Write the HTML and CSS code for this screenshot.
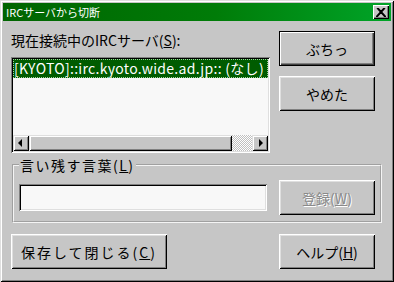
FILE: index.html
```html
<!DOCTYPE html>
<html lang="ja">
<head>
    <meta charset="UTF-8">
    <meta name="viewport" content="width=device-width, initial-scale=1.0">
    <title>IRCサーバから切断</title>
    <link rel="stylesheet" href="styles.css">
</head>
<body>
    <div class="window">
        <div class="titlebar">
            <span class="title">IRCサーバから切断</span>
            <span class="close-btn">
                <svg width="10" height="9" viewBox="0 0 10 9">
                    <path d="M1 0 L9 9 M2 0 L10 9 M9 0 L1 9 M8 0 L0 9" stroke="#000" stroke-width="1.2"/>
                </svg>
            </span>
        </div>
        <div class="main">
            <div class="top-row">
                <div class="server-col">
                    <div class="label">現在接続中のIRCサーバ(<u>S</u>):</div>
                    <div class="listbox">
                        <div class="list-items">
                            <div class="item selected">[KYOTO]::irc.kyoto.wide.ad.jp:: (なし)</div>
                        </div>
                        <div class="hscroll">
                            <span class="arrow-btn">
                                <svg width="14" height="14" viewBox="0 0 14 14"><polygon points="8,3 4,7 8,11" fill="#000"/></svg>
                            </span>
                            <span class="thumb"></span>
                            <span class="track"></span>
                            <span class="arrow-btn">
                                <svg width="14" height="14" viewBox="0 0 14 14"><polygon points="6,3 10,7 6,11" fill="#000"/></svg>
                            </span>
                        </div>
                    </div>
                </div>
                <div class="btn-col">
                    <button class="btn default">ぶちっ</button>
                    <button class="btn">やめた</button>
                </div>
            </div>
            <fieldset class="group">
                <legend>言い残す言葉(<u>L</u>)</legend>
                <div class="group-row">
                    <input class="textbox" type="text">
                    <button class="btn" disabled>登録(<u>W</u>)</button>
                </div>
            </fieldset>
            <div class="bottom-row">
                <button class="btn wide">保存して閉じる(<u>C</u>)</button>
                <button class="btn">ヘルプ(<u>H</u>)</button>
            </div>
        </div>
    </div>
</body>
</html>
```

FILE: styles.css
```css
body {
    margin: 0;
    padding: 0;
    font-family: "Noto Sans CJK JP", "Liberation Sans", sans-serif;
    font-size: 14px;
    color: #000;
    background-color: #c6c6c6;
}
.window {
    width: 394px;
    height: 282px;
    box-sizing: border-box;
    padding: 3px;
    background-color: #c6c6c6;
    box-shadow: inset 1px 1px #dfdfdf, inset -1px -1px #000, inset 2px 2px #fff, inset -2px -2px #808080;
}
.titlebar {
    height: 18px;
    display: flex;
    align-items: center;
    justify-content: space-between;
    padding: 0 2px;
    background: linear-gradient(to right, #006400, #007c08 55%, #00a428);
}
.title {
    color: #fff;
    font-size: 11px;
    line-height: 18px;
    padding-left: 1px;
}
.close-btn {
    width: 16px;
    height: 14px;
    box-sizing: border-box;
    display: flex;
    align-items: center;
    justify-content: center;
    background-color: #c6c6c6;
    box-shadow: inset 1px 1px #fff, inset -1px -1px #000, inset -2px -2px #808080;
}
.main {
    padding: 10px 16px 0 8px;
}
.top-row {
    display: flex;
    gap: 9px;
}
.server-col {
    width: 259px;
}
.label {
    line-height: 18px;
    margin-bottom: 8px;
}
.listbox {
    height: 96px;
    box-sizing: border-box;
    display: flex;
    flex-direction: column;
    padding: 2px;
    background-color: #f8f8f8;
    box-shadow: inset 1px 1px #808080, inset -1px -1px #fff, inset 2px 2px #000, inset -2px -2px #dfdfdf;
}
.list-items {
    flex: 1;
    overflow: hidden;
}
.item {
    height: 19px;
    line-height: 19px;
    white-space: nowrap;
    overflow: hidden;
    padding-left: 1px;
    letter-spacing: 0.3px;
}
.item.selected {
    background-color: #005c00;
    color: #fff;
    outline: 1px dotted #9fd09f;
    outline-offset: -1px;
}
.hscroll {
    height: 16px;
    display: flex;
}
.arrow-btn {
    width: 16px;
    height: 16px;
    box-sizing: border-box;
    display: flex;
    align-items: center;
    justify-content: center;
    background-color: #c6c6c6;
    box-shadow: inset 1px 1px #dfdfdf, inset -1px -1px #000, inset 2px 2px #fff, inset -2px -2px #808080;
}
.thumb {
    flex: 1;
    background-color: #c6c6c6;
    box-shadow: inset 1px 1px #dfdfdf, inset -1px -1px #000, inset 2px 2px #fff, inset -2px -2px #808080;
}
.track {
    width: 20px;
    background: repeating-conic-gradient(#fff 0 25%, #c0c0c0 0 50%) 0 0 / 2px 2px;
}
.btn-col {
    display: flex;
    flex-direction: column;
    gap: 10px;
}
.btn {
    width: 96px;
    height: 35px;
    padding: 0;
    border: none;
    font-family: inherit;
    font-size: 14px;
    color: #000;
    background-color: #c6c6c6;
    box-shadow: inset 1px 1px #fff, inset -1px -1px #000, inset 2px 2px #dfdfdf, inset -2px -2px #808080;
}
.btn.default {
    border: 1px solid #000;
    box-shadow: inset 1px 1px #fff, inset -1px -1px #404040, inset -2px -2px #808080;
}
.btn:disabled {
    color: #8a8a8a;
    text-shadow: 1px 1px #fff;
}
.btn.wide {
    width: 156px;
    letter-spacing: 2px;
}
.group {
    margin: 4px -7px 0 1px;
    padding: 7px 5px 6px 5px;
    border: 2px groove #f4f4f4;
    min-inline-size: 0;
}
.group legend {
    padding: 0 1px;
    line-height: 16px;
    letter-spacing: 1.5px;
}
.group-row {
    display: flex;
    align-items: center;
    gap: 12px;
}
.textbox {
    width: 248px;
    height: 27px;
    box-sizing: border-box;
    margin: 0;
    border: none;
    background-color: #f8f8f8;
    box-shadow: inset 1px 1px #808080, inset -1px -1px #fff, inset 2px 2px #000, inset -2px -2px #dfdfdf;
}
.bottom-row {
    display: flex;
    justify-content: space-between;
    margin-top: 11px;
}
```
